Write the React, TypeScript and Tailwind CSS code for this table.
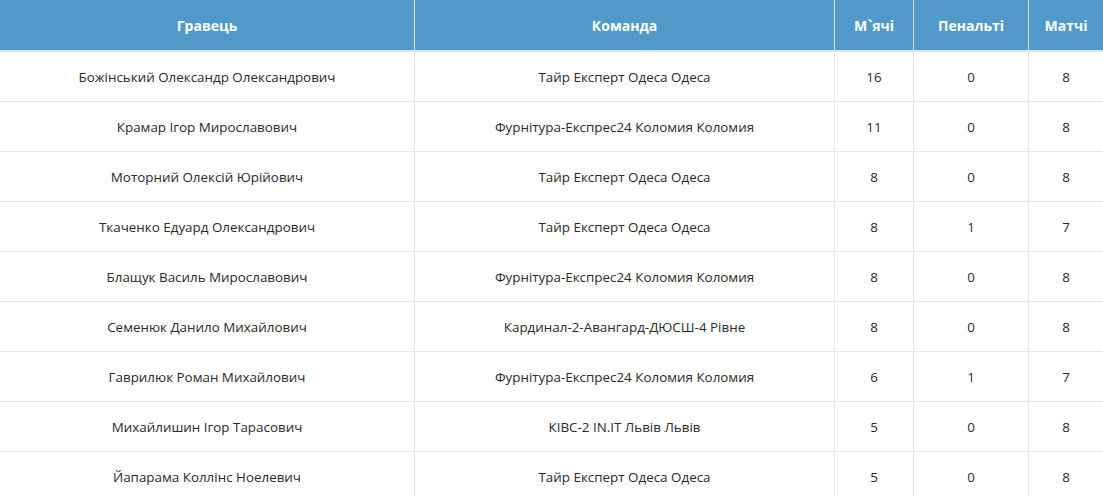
import React from "react";

const rows: [string, string, string, string, string][] = [
  ["Божінський Олександр Олександрович", "Тайр Експерт Одеса Одеса", "16", "0", "8"],
  ["Крамар Ігор Мирославович", "Фурнітура-Експрес24 Коломия Коломия", "11", "0", "8"],
  ["Моторний Олексій Юрійович", "Тайр Експерт Одеса Одеса", "8", "0", "8"],
  ["Ткаченко Едуард Олександрович", "Тайр Експерт Одеса Одеса", "8", "1", "7"],
  ["Блащук Василь Мирославович", "Фурнітура-Експрес24 Коломия Коломия", "8", "0", "8"],
  ["Семенюк Данило Михайлович", "Кардинал-2-Авангард-ДЮСШ-4 Рівне", "8", "0", "8"],
  ["Гаврилюк Роман Михайлович", "Фурнітура-Експрес24 Коломия Коломия", "6", "1", "7"],
  ["Михайлишин Ігор Тарасович", "КІВС-2 IN.IT Львів Львів", "5", "0", "8"],
  ["Йапарама Коллінс Ноелевич", "Тайр Експерт Одеса Одеса", "5", "0", "8"],
];

const widths = ["w-[414px]", "w-[420px]", "w-[79px]", "w-[115px]", "w-[75px]"];
const headers = ["Гравець", "Команда", "М`ячі", "Пенальті", "Матчі"];

export default function App() {
  return (
    <div
      className="w-[1103px] h-[496px] overflow-hidden bg-white text-[13.4px] text-[#2a2a2a]"
      style={{ fontFamily: '"Open Sans", "Noto Sans", sans-serif' }}
    >
      <div className="flex h-[52px] bg-[#5199c9] border-b-2 border-[#d6e6f2] text-white font-bold text-[14px]">
        {headers.map((h, i) => (
          <div
            key={i}
            className={`${widths[i]} shrink-0 flex items-center justify-center ${i > 0 ? "border-l border-[#d9dde0]" : ""}`}
          >
            {h}
          </div>
        ))}
      </div>
      {rows.map((r, ri) => (
        <div key={ri} className="flex h-[50px] border-b border-[#e8e8e8]">
          {r.map((c, i) => (
            <div
              key={i}
              className={`${widths[i]} shrink-0 flex items-center justify-center pt-[2px] ${i > 0 ? "border-l border-[#e8e8e8]" : ""}`}
            >
              {c}
            </div>
          ))}
        </div>
      ))}
    </div>
  );
}
